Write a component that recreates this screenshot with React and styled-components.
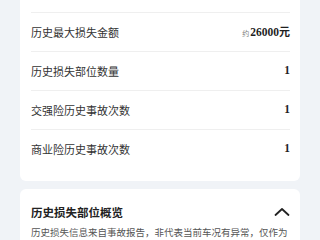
import styled, { createGlobalStyle } from "styled-components";

const GlobalStyle = createGlobalStyle`
  html, body {
    margin: 0;
    padding: 0;
    background: #f0f3f7;
    font-family: "Noto Sans CJK SC", "Noto Sans", sans-serif;
  }
`;

const Page = styled.div`
  width: 320px;
  height: 240px;
  overflow: hidden;
  box-sizing: border-box;
  padding: 0 20px;
  display: flex;
  flex-direction: column;
  gap: 8px;
`;

const Card = styled.div`
  background: #fff;
  border-radius: ${({ $clipped }) => ($clipped ? "0 0 6px 6px" : "6px")};
  padding: ${({ $clipped }) => ($clipped ? "12px 10px 13px 11px" : "14px 10px 0 11px")};
`;

const Row = styled.div`
  display: flex;
  align-items: center;
  justify-content: space-between;
  height: 38px;
  border-top: 1px solid #efefef;
`;

const Label = styled.span`
  font-size: 11px;
  color: #333;
  line-height: 1;
`;

const Value = styled.span`
  font-family: "Liberation Serif", "Noto Sans CJK SC", serif;
  font-weight: 700;
  font-size: 11.5px;
  color: #1f1f1f;
  line-height: 1;
  display: flex;
  align-items: baseline;
`;

const Approx = styled.span`
  font-family: "Noto Sans CJK SC", sans-serif;
  font-weight: 400;
  font-size: 7px;
  color: #777;
  margin-right: 1px;
`;

const Unit = styled.span`
  font-family: "Noto Sans CJK SC", sans-serif;
  font-weight: 700;
  font-size: 11px;
`;

const Header = styled.div`
  display: flex;
  align-items: center;
  justify-content: space-between;
  height: 18px;
`;

const Title = styled.h3`
  margin: 0;
  font-size: 11.5px;
  font-weight: 700;
  color: #222;
`;

const Desc = styled.p`
  margin: 4px 0 0;
  font-size: 9.5px;
  line-height: 15px;
  color: #555;
`;

const Chevron = () => (
  <svg width="16" height="10" viewBox="0 0 16 10" fill="none">
    <path d="M1.5 8 L8 2 L14.5 8" stroke="#222" strokeWidth="1.8" strokeLinecap="round" strokeLinejoin="round" />
  </svg>
);

const rows = [
  { label: "历史最大损失金额", value: "26000", approx: true, unit: "元" },
  { label: "历史损失部位数量", value: "1" },
  { label: "交强险历史事故次数", value: "1" },
  { label: "商业险历史事故次数", value: "1" },
];

export default function App() {
  return (
    <>
      <GlobalStyle />
      <Page>
        <Card $clipped>
          {rows.map((r) => (
            <Row key={r.label}>
              <Label>{r.label}</Label>
              <Value>
                {r.approx && <Approx>约</Approx>}
                {r.value}
                {r.unit && <Unit>{r.unit}</Unit>}
              </Value>
            </Row>
          ))}
        </Card>
        <Card>
          <Header>
            <Title>历史损失部位概览</Title>
            <Chevron />
          </Header>
          <Desc>历史损失信息来自事故报告，非代表当前车况有异常，仅作为参考使用。</Desc>
        </Card>
      </Page>
    </>
  );
}
